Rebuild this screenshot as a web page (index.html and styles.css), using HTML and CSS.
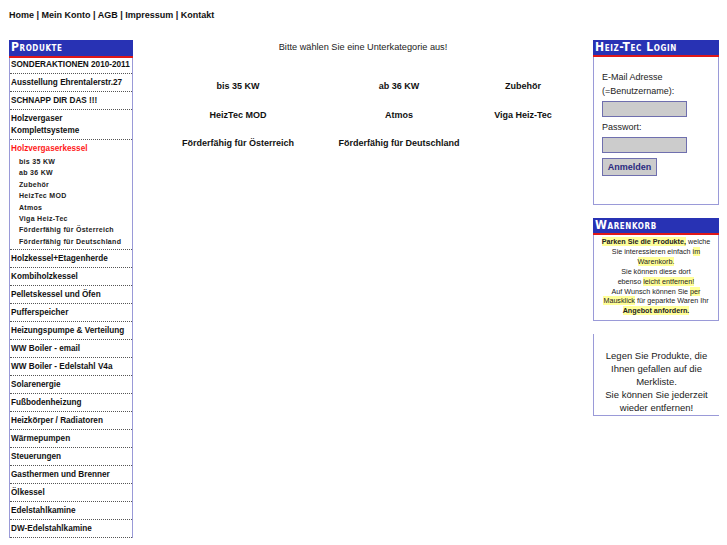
FILE: index.html
```html
<!DOCTYPE html>
<html lang="de">
<head>
<meta charset="utf-8">
<title>Heiz-Tec</title>
<link rel="stylesheet" href="styles.css">
</head>
<body>
<div class="topnav"><a href="#">Home</a> | <a href="#">Mein Konto</a> | <a href="#">AGB</a> | <a href="#">Impressum</a> | <a href="#">Kontakt</a></div>
<div class="page">
  <div class="leftcol">
    <div class="box">
      <div class="boxhead">Produkte</div>
      <ul class="catlist">
        <li class="first">SONDERAKTIONEN 2010-2011</li>
        <li>Ausstellung Ehrentalerstr.27</li>
        <li>SCHNAPP DIR DAS !!!</li>
        <li>Holzvergaser<br>Komplettsysteme</li>
        <li><span class="active">Holzvergaserkessel</span>
          <ul class="sublist">
            <li>bis 35 KW</li>
            <li>ab 36 KW</li>
            <li>Zubehör</li>
            <li>HeizTec MOD</li>
            <li>Atmos</li>
            <li>Viga Heiz-Tec</li>
            <li>Förderfähig für Österreich</li>
            <li>Förderfähig für Deutschland</li>
          </ul>
        </li>
        <li>Holzkessel+Etagenherde</li>
        <li>Kombiholzkessel</li>
        <li>Pelletskessel und Öfen</li>
        <li>Pufferspeicher</li>
        <li>Heizungspumpe &amp; Verteilung</li>
        <li>WW Boiler - email</li>
        <li>WW Boiler - Edelstahl V4a</li>
        <li>Solarenergie</li>
        <li>Fußbodenheizung</li>
        <li>Heizkörper / Radiatoren</li>
        <li>Wärmepumpen</li>
        <li>Steuerungen</li>
        <li>Gasthermen und Brenner</li>
        <li>Ölkessel</li>
        <li>Edelstahlkamine</li>
        <li>DW-Edelstahlkamine</li>
      </ul>
    </div>
  </div>
  <div class="main">
    <p class="hint">Bitte wählen Sie eine Unterkategorie aus!</p>
    <div class="subgrid">
      <div>bis 35 KW</div>
      <div>ab 36 KW</div>
      <div>Zubehör</div>
      <div>HeizTec MOD</div>
      <div>Atmos</div>
      <div>Viga Heiz-Tec</div>
      <div>Förderfähig für Österreich</div>
      <div>Förderfähig für Deutschland</div>
    </div>
  </div>
  <div class="rightcol">
    <div class="box login">
      <div class="boxhead">Heiz-Tec Login</div>
      <div class="loginbody">
        <div class="lbl">E-Mail Adresse<br>(=Benutzername):</div>
        <div class="field"></div>
        <div class="lbl pw">Passwort:</div>
        <div class="field"></div>
        <div class="btn">Anmelden</div>
      </div>
    </div>
    <div class="box cart">
      <div class="boxhead">Warenkorb</div>
      <div class="cartbody">
        <b class="hl">Parken Sie die Produkte,</b> welche<br>
        Sie interessieren einfach <span class="hl">im<br>Warenkorb.</span><br>
        Sie können diese dort<br>
        ebenso <span class="hl">leicht entfernen!</span><br>
        Auf Wunsch können Sie <span class="hl">per<br>Mausklick</span> für geparkte Waren Ihr<br>
        <b class="hl">Angebot anfordern.</b>
      </div>
    </div>
    <div class="memo">
      Legen Sie Produkte, die<br>Ihnen gefallen auf die<br>Merkliste.<br>Sie können Sie jederzeit<br>wieder entfernen!
    </div>
  </div>
</div>
</body>
</html>
```

FILE: styles.css
```css
html, body {
  margin: 0;
  padding: 0;
  background: #fff;
  font-family: "Liberation Sans", Arial, sans-serif;
  color: #111;
}
a { color: #111; text-decoration: none; }
.topnav {
  padding: 9px 0 0 9px;
  height: 40px;
  box-sizing: border-box;
  font-size: 9px;
  line-height: 12px;
  font-weight: bold;
}
.page {
  display: flex;
  align-items: flex-start;
  padding: 0 8px 0 9px;
}
.leftcol { width: 124px; flex: none; }
.rightcol { width: 126px; flex: none; }
.main { flex: 1; }

.box {
  border: 1px solid #9a9ad8;
  border-top: none;
  background: #fff;
}
.boxhead {
  height: 15px;
  background: #2832b4;
  color: #fff;
  border-bottom: 2px solid #e01818;
  font-family: "DejaVu Sans Condensed", "DejaVu Sans", sans-serif;
  font-weight: bold;
  font-variant: small-caps;
  font-size: 12px;
  line-height: 15px;
  letter-spacing: 0.6px;
  padding-left: 2px;
  margin: 0 -1px;
}
.leftcol .box { border-bottom: none; }
.leftcol .boxhead { height: 16px; }
.catlist {
  list-style: none;
  margin: 0;
  padding: 0;
}
.catlist > li {
  font-size: 8.2px;
  font-weight: bold;
  line-height: 12px;
  padding: 3px 1px 2px 1px;
  border-bottom: 1px dotted #555;
  white-space: nowrap;
}
.catlist > li.first { padding-top: 1px; }
.catlist .active { color: #ff1a1a; }
.sublist {
  list-style: none;
  margin: 1px 0 0 0;
  padding: 0 0 0 8px;
}
.sublist li {
  font-size: 7px;
  line-height: 11.4px;
  letter-spacing: 0.3px;
  color: #222;
}

.hint {
  margin: 0;
  padding-top: 1px;
  text-align: center;
  font-size: 9.2px;
  line-height: 12px;
  color: #222;
}
.subgrid {
  display: grid;
  grid-template-columns: 150px 172px 76px;
  grid-auto-rows: 28.5px;
  margin: 27px 0 0 30px;
  font-size: 9px;
  font-weight: bold;
  line-height: 12px;
  text-align: center;
}

.login { height: 164px; }
.loginbody {
  padding: 13px 0 0 8px;
  font-size: 9px;
  line-height: 14px;
  color: #222;
}
.field {
  width: 83px;
  height: 14px;
  background: #cccccc;
  border: 1px solid #6f6fae;
  margin: 3px 0 0 0;
}
.lbl.pw { margin-top: 3px; }
.btn {
  display: inline-block;
  margin-top: 5px;
  width: 53px;
  height: 16px;
  box-sizing: content-box;
  background: #cccccc;
  border: 1px solid #6f6fae;
  color: #2a2a80;
  font-weight: bold;
  font-size: 9px;
  line-height: 16px;
  text-align: center;
}

.cart { margin-top: 13px; height: 102px; }
.cartbody {
  padding-top: 2px;
  text-align: center;
  font-size: 7.2px;
  line-height: 9.9px;
  color: #222;
}
.hl { background: #ffff99; }

.memo {
  margin-top: 13px;
  height: 66px;
  padding-top: 15px;
  border-left: 1px solid #9a9ad8;
  border-bottom: 1px solid #9a9ad8;
  text-align: center;
  font-size: 9.5px;
  line-height: 13px;
  color: #222;
}
```
